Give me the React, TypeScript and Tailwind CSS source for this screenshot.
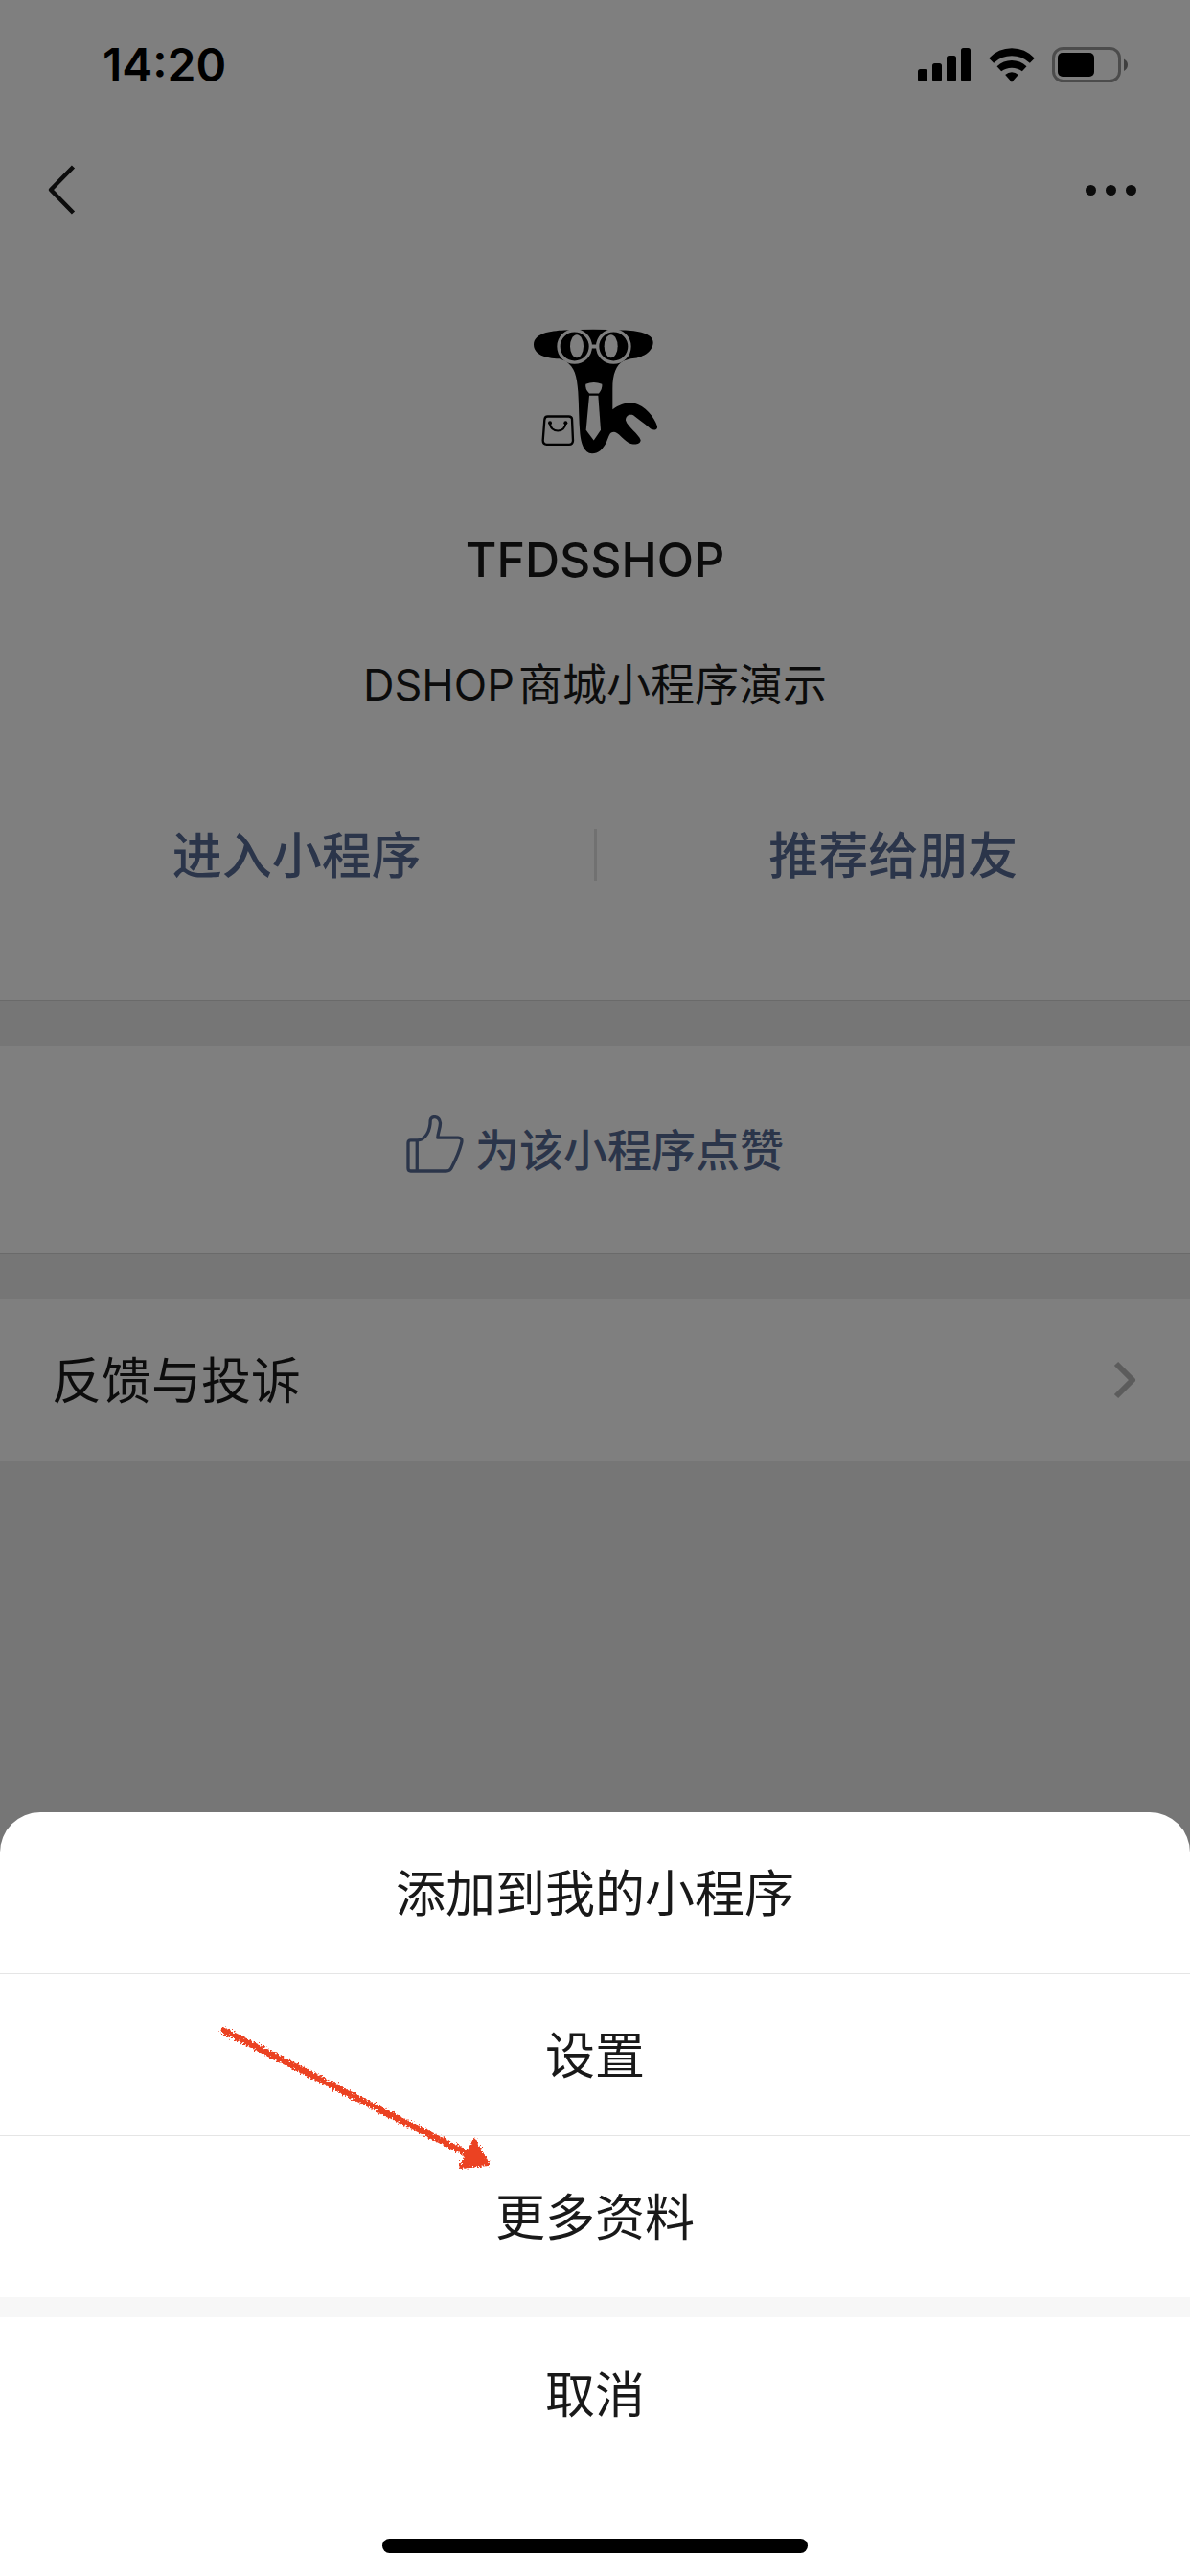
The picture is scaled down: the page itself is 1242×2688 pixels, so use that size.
import type { ReactNode } from "react";

function SignalIcon() {
  return (
    <svg className="h-9 w-14" viewBox="0 0 56 36" aria-hidden="true">
      <rect x="0" y="22" width="10" height="13" rx="2.6" />
      <rect x="15" y="16" width="10" height="19" rx="2.6" />
      <rect x="30" y="8" width="10" height="27" rx="2.6" />
      <rect x="45" y="0" width="10" height="35" rx="2.6" />
    </svg>
  );
}

function WifiIcon() {
  return (
    <svg className="h-9 w-12" viewBox="0 0 143 108" aria-hidden="true">
      <path d="M0 32 Q30 1 71.500 1 Q113 1 143 32 L128 47 Q103 25 71.500 25 Q40 25 15 47 Z" />
      <path d="M25 58 Q45 39 71.500 39 Q98 39 118 58 L104 73 Q90 62 71.500 62 Q53 62 39 73 Z" />
      <path d="M51 84 Q60 76 71.500 76 Q83 76 92 84 L71.500 107 Z" />
    </svg>
  );
}

function BatteryIcon() {
  return (
    <svg className="h-[38px] w-20" viewBox="0 0 80 38" aria-hidden="true">
      <rect x="1.500" y="1.500" width="69" height="34" rx="10" fill="none" stroke="#000" strokeOpacity="0.4" strokeWidth="3" />
      <rect x="6" y="6" width="38" height="25" rx="5" />
      <path d="M75 12.500 Q79 14.500 79 18.500 Q79 22.500 75 25 Z" fillOpacity="0.5" />
    </svg>
  );
}

function Logo() {
  return (
    <svg className="h-[131px] w-[129px]" viewBox="114 98 387 392" role="img" aria-label="TFDSSHOP">
      <path d="M210 102 Q300 97 392 102 C440 103 488 112 488 140 C488 170 452 190 418 191 L396 198 C372 210 361 240 361 285 L361 350 C385 333 405 327 428 330 C462 338 492 374 501 403 C503 416 486 417 476 407 C460 392 440 380 426 368 C414 364 402 370 402 384 C408 405 444 428 449 446 C448 462 425 461 412 455 C392 444 380 422 366 421 C350 421 350 436 342 452 C331 475 316 488 297 488 C271 487 262 455 259 425 C255 385 256 340 253 295 C249 245 243 220 214 199 L194 191 C150 190 114 178 114 146 C116 112 165 104 210 102 Z" />
      <g fill="none" stroke="#fff" strokeWidth="10">
        <circle cx="242" cy="153" r="50" />
        <circle cx="364" cy="153" r="50" />
      </g>
      <path d="M292 147 H314 V159 H292 Z" fill="#fff" />
      <ellipse cx="249" cy="152" rx="21" ry="36" fill="#fff" />
      <ellipse cx="356" cy="152" rx="21" ry="36" fill="#fff" />
      <path d="M277 271 Q302 260 328 271 Q330 285 318 300 H288 Q274 286 277 271 Z" fill="#fff" />
      <path d="M288 307 H316 L324 415 L302 447 L278 415 Z" fill="#fff" />
      <path d="M158 372 H224 Q233 372 234 380 L237 448 Q236 460 225 460 H155 Q143 459 143 447 L148 382 Q149 372 158 372 Z" fill="none" stroke="#000" strokeWidth="7" />
      <path d="M165 393 C165 425 214 425 214 393" fill="none" stroke="#000" strokeWidth="6" />
      <circle cx="165" cy="392" r="6" />
      <circle cx="214" cy="392" r="6" />
    </svg>
  );
}

function ThumbIcon() {
  return (
    <svg
      className="size-[60px]"
      viewBox="68 71 181 181"
      fill="none"
      stroke="currentColor"
      strokeWidth="10"
      strokeLinejoin="round"
      aria-hidden="true"
    >
      <path d="M102 149 H82 Q74 149 74 158 V237 Q74 246 82 246 H194 Q206 246 211 235 Q234 190 242 157 Q246 141 231 141 H167 C168 124 176 108 175 94 C172 72 146 71 144 86 C144 117 130 149 102 149 Z" />
      <path d="M102 149 V246" />
    </svg>
  );
}

function ArrowMark() {
  return (
    <svg
      className="pointer-events-none absolute top-[51px] left-[226px] h-[160px] w-[292px]"
      viewBox="225 2110 292 160"
      aria-hidden="true"
    >
      <defs>
        <filter id="crayon" x="-5%" y="-5%" width="110%" height="110%">
          <feTurbulence type="fractalNoise" baseFrequency="0.5" numOctaves="3" seed="4" result="noise" />
          <feDisplacementMap in="SourceGraphic" in2="noise" scale="8" xChannelSelector="R" yChannelSelector="G" />
        </filter>
      </defs>
      <g filter="url(#crayon)" fill="#eb4224" stroke="#eb4224" strokeLinecap="round" strokeLinejoin="round">
        <path d="M233 2118 L490 2248" strokeWidth="7" />
        <path d="M494 2233 L508 2257 L480 2260 Z" strokeWidth="4" />
      </g>
    </svg>
  );
}

function SheetItem({ children }: { children: ReactNode }) {
  return (
    <button type="button" className="flex h-[168px] w-full items-center justify-center pt-1">
      {children}
    </button>
  );
}

export default function App() {
  return (
    <div className="min-h-screen bg-[#ededed] font-['Inter','Noto_Sans_CJK_SC',sans-serif] text-[#191919]">
      <main>
        <section className="border-b border-[#d5d5d5] bg-white pb-[125px]">
          <div className="flex h-[132px] items-center justify-between pt-1 pr-16 pl-[107px] text-black">
            <time className="text-[48px] leading-[60px] font-semibold">14:20</time>
            <div className="flex items-center gap-[18px]">
              <SignalIcon />
              <WifiIcon />
              <BatteryIcon />
            </div>
          </div>
          <nav className="flex h-[132px] items-center justify-between px-12">
            <button type="button" aria-label="返回" className="py-4">
              <svg className="h-[52px] w-8" viewBox="0 0 32 52" fill="none" stroke="currentColor" strokeWidth="4.500">
                <path d="M28.500 2 L5 26 L28.500 50" strokeLinejoin="round" />
              </svg>
            </button>
            <button type="button" aria-label="更多" className="flex gap-[10px] py-8 pr-2">
              <span className="size-[11px] rounded-full bg-current" />
              <span className="size-[11px] rounded-full bg-current" />
              <span className="size-[11px] rounded-full bg-current" />
            </button>
          </nav>
          <div className="flex flex-col items-center pt-[79px]">
            <Logo />
            <h1 className="mt-20 text-[50px] leading-[60px] font-medium">TFDSSHOP</h1>
            <p className="mt-[70px] flex items-baseline gap-1 text-[46px] leading-[60px]">
              <span className="text-[45px]">DSHOP</span>
              <span>商城小程序演示</span>
            </p>
          </div>
          <div className="mt-[120px] flex h-[54px] items-center text-[52px] leading-[54px] font-medium text-[#576b95]">
            <button type="button" className="flex-1 pt-1">进入小程序</button>
            <span className="h-full w-[3px] bg-[#e2e2e2]" />
            <button type="button" className="flex-1 pt-1">推荐给朋友</button>
          </div>
        </section>

        <section className="mt-[46px] border-y border-[#d5d5d5] bg-white">
          <button
            type="button"
            className="flex h-[216px] w-full items-center justify-center gap-3 text-[46px] leading-[60px] font-medium text-[#576b95]"
          >
            <span className="pb-3"><ThumbIcon /></span>
            为该小程序点赞
          </button>
        </section>

        <section className="mt-[46px] border-t border-[#d5d5d5] bg-white">
          <button type="button" className="flex h-[168px] w-full items-center justify-between pr-[54px] pl-[54px] text-[52px] leading-[60px]">
            <span className="pt-1">反馈与投诉</span>
            <svg className="h-10 w-7" viewBox="0 0 28 40" fill="none" stroke="#b8b8b8" strokeWidth="6" aria-hidden="true">
              <path d="M5 3 L22 20 L5 37" strokeLinejoin="round" />
            </svg>
          </button>
        </section>
      </main>

      <div className="fixed inset-0 flex flex-col justify-end bg-black/50">
        <div role="dialog" aria-label="更多操作" className="rounded-t-[42px] bg-white text-[52px] leading-[60px] text-[#191919]">
          <SheetItem>添加到我的小程序</SheetItem>
          <div className="relative border-t border-[#e5e5e5]">
            <SheetItem>设置</SheetItem>
            <ArrowMark />
          </div>
          <div className="border-t border-[#e5e5e5]">
            <SheetItem>更多资料</SheetItem>
          </div>
          <div className="border-t-[21px] border-[#f7f7f7] pb-6">
            <button type="button" className="flex h-40 w-full items-center justify-center pt-1">取消</button>
            <div className="mx-auto mt-[71px] h-[15px] w-[444px] rounded-full bg-black" />
          </div>
        </div>
      </div>
    </div>
  );
}
